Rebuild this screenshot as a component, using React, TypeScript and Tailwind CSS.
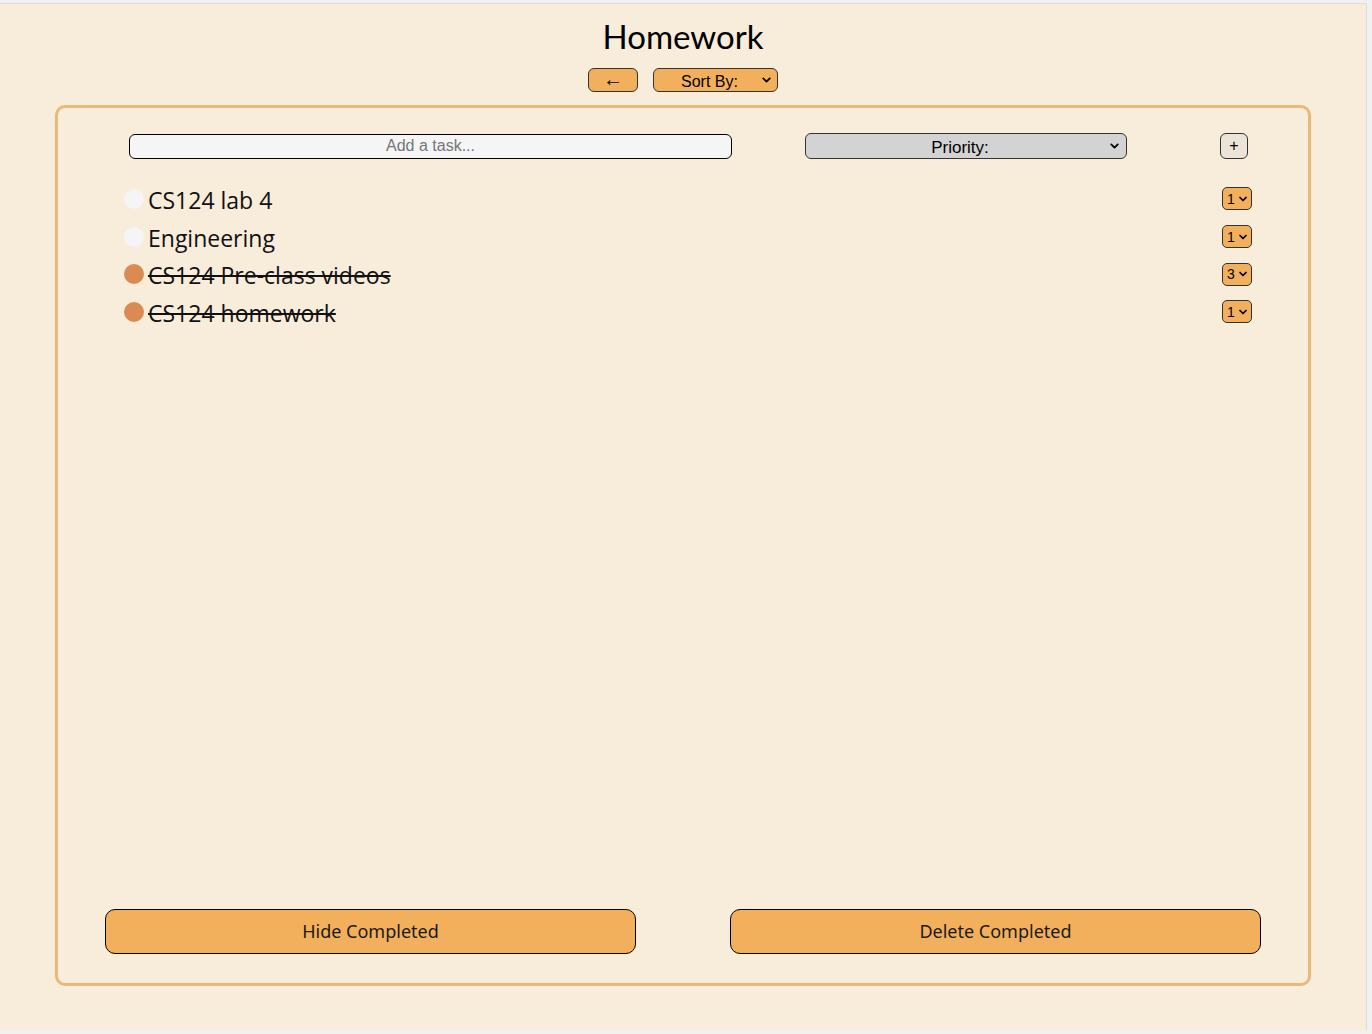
import { ChevronDown } from 'lucide-react';

type Task = { id: number; name: string; done: boolean; priority: number };

const tasks: Task[] = [
  { id: 1, name: 'CS124 lab 4', done: false, priority: 1 },
  { id: 2, name: 'Engineering', done: false, priority: 1 },
  { id: 3, name: 'CS124 Pre-class videos', done: true, priority: 3 },
  { id: 4, name: 'CS124 homework', done: true, priority: 1 },
];

const round = { fontFamily: 'Lato, "Noto Sans", sans-serif' };
const taskFont = { fontFamily: '"Open Sans", "Noto Sans", sans-serif' };
const arial = { fontFamily: '"Liberation Sans", Arial, sans-serif' };
const soft = { fontFamily: '"Noto Sans", "Open Sans", sans-serif' };

function Select({ label, className, chevron }: { label: string; className: string; chevron: string }) {
  return (
    <div className={`relative flex items-center ${className}`}>
      <select
        className="w-full h-[20px] leading-[20px] pt-[2px] pb-0 appearance-none bg-transparent outline-none cursor-pointer text-black"
        style={{ ...arial, textAlignLast: 'center' }}
        defaultValue=""
      >
        <option value="">{label}</option>
      </select>
      <ChevronDown
        className={`pointer-events-none absolute top-1/2 -translate-y-1/2 text-black ${chevron}`}
        strokeWidth={3.4}
      />
    </div>
  );
}

function TaskRow({ task }: { task: Task }) {
  return (
    <li className="flex items-center h-[37.7px]">
      <span
        className={`w-[20px] h-[20px] rounded-full shrink-0 ${task.done ? 'bg-[#da8b52]' : 'bg-[#f5f5f5]'}`}
      />
      <span
        className={`ml-[4px] pt-[3px] text-[23px] leading-none text-[#111] ${task.done ? 'line-through decoration-[2px]' : ''}`}
        style={taskFont}
      >
        {task.name}
      </span>
      <div className="ml-auto relative flex items-center w-[30px] h-[23px] rounded-[5px] border border-[#333] bg-[#f3b05c]">
        <select
          className="w-full h-[16px] appearance-none bg-transparent pl-[4px] py-0 text-[14px] leading-[16px] outline-none text-black"
          style={arial}
          defaultValue={task.priority}
        >
          <option value={1}>1</option>
          <option value={2}>2</option>
          <option value={3}>3</option>
        </select>
        <ChevronDown
          className="pointer-events-none absolute right-[2px] top-1/2 -translate-y-1/2 w-[12px] h-[12px]"
          strokeWidth={3.5}
        />
      </div>
    </li>
  );
}

export default function App() {
  return (
    <div className="w-[1372px] h-[1034px] bg-[#f1f1f1] pt-[3px] pr-[5px] pb-[4px]">
      <div className="h-full w-full bg-[#f8ecdb] border-t border-r border-[#dcdcdc] flex flex-col">
        {/* Header */}
        <h1 className="text-center text-[33px] leading-none pt-[16px] text-black" style={round}>
          Homework
        </h1>
        <div className="flex justify-center gap-[15px] mt-[15px]">
          <button
            className="w-[50px] h-[24px] rounded-[6px] border border-[#333] bg-[#f3b05c] text-[20px] leading-none pb-[3px] text-black"
            style={arial}
          >
            ←
          </button>
          <Select
            label="Sort By:"
            className="w-[125px] h-[24px] rounded-[6px] border border-[#333] bg-[#f3b05c] text-[16px] pr-[12px]"
            chevron="right-[4px] w-[13px] h-[13px]"
          />
        </div>

        {/* Panel */}
        <div className="mx-[55px] mt-[13px] mb-[44px] flex-1 rounded-[10px] border-[3px] border-[#e8b97a] flex flex-col">
          <div className="flex items-center pt-[25px] pl-[71px]">
            <input
              placeholder="Add a task..."
              className="w-[603px] h-[25px] rounded-[6px] border border-black bg-[#f5f5f5] text-center text-[16px] placeholder:text-[#767676] outline-none"
              style={arial}
            />
            <Select
              label="Priority:"
              className="ml-[73px] w-[322px] h-[26px] rounded-[6px] border border-[#333] bg-[#d3d3d3] text-[17px] pr-[12px]"
              chevron="right-[5px] w-[13px] h-[13px]"
            />
            <button
              className="ml-[93px] w-[28px] h-[26px] rounded-[6px] border border-[#333] bg-[#ece4d9] text-[16px] leading-none text-black"
              style={arial}
            >
              +
            </button>
          </div>

          <ul className="mt-[21px] pl-[66px] pr-[56px]">
            {tasks.map((t) => (
              <TaskRow key={t.id} task={t} />
            ))}
          </ul>

          <div className="mt-auto mb-[29px] flex justify-around">
            <button
              className="w-[531px] h-[45px] rounded-[10px] border border-black bg-[#f3b05c] text-[18px] text-[#1a1a1a]"
              style={soft}
            >
              Hide Completed
            </button>
            <button
              className="w-[531px] h-[45px] rounded-[10px] border border-black bg-[#f3b05c] text-[18px] text-[#1a1a1a]"
              style={soft}
            >
              Delete Completed
            </button>
          </div>
        </div>
      </div>
    </div>
  );
}
